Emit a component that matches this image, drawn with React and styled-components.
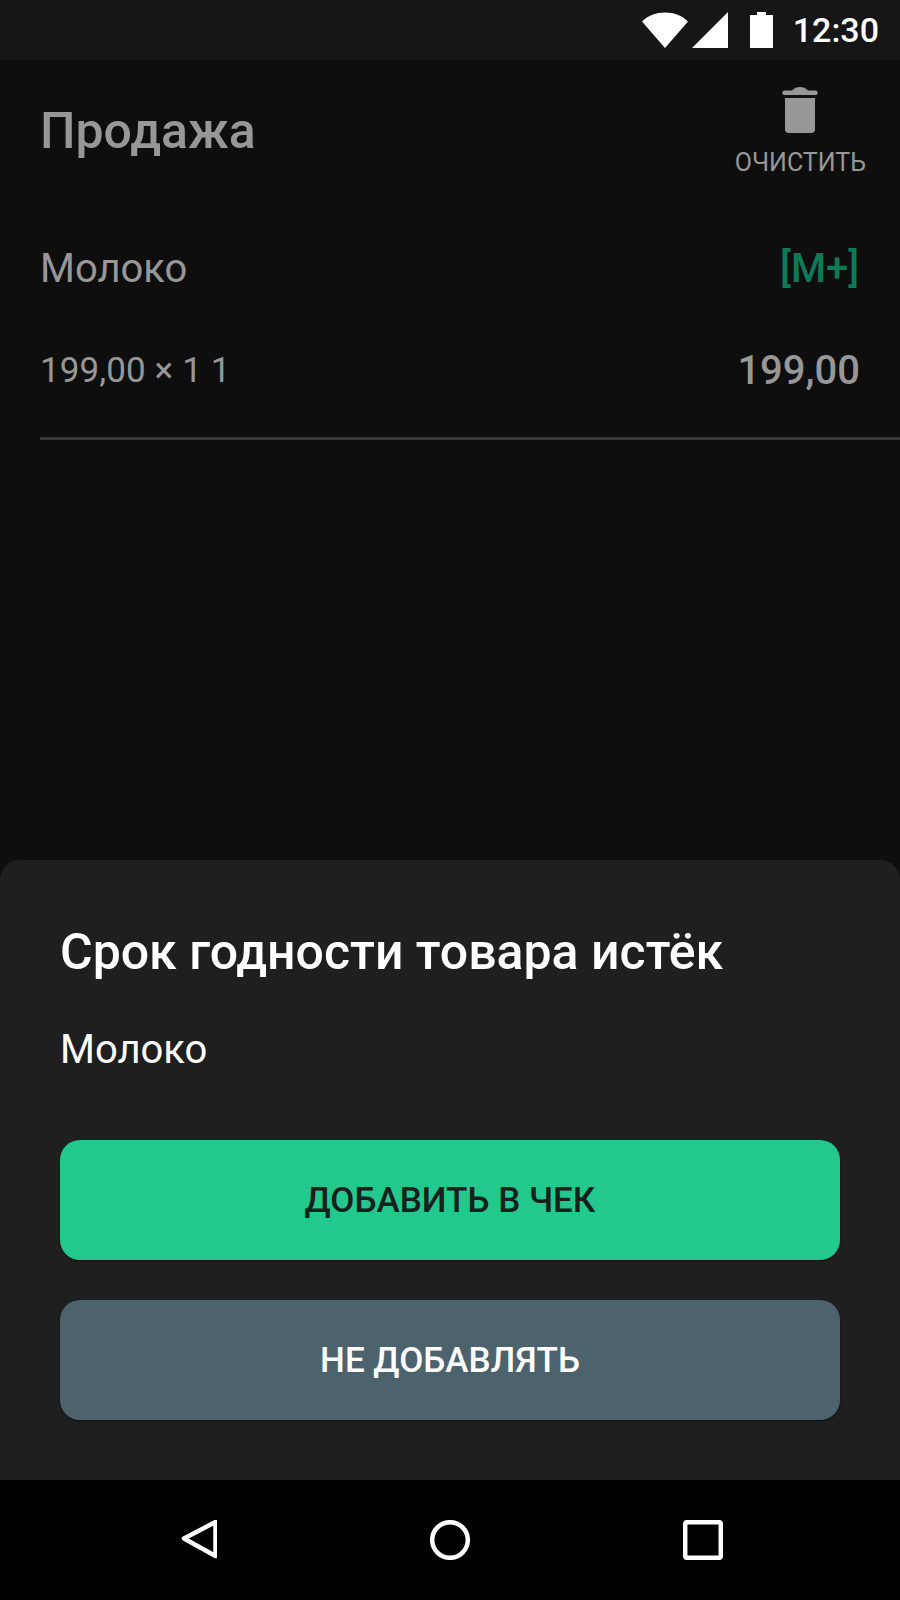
import React from "react";
import styled, { createGlobalStyle } from "styled-components";

const Global = createGlobalStyle`
  html, body {
    margin: 0;
    padding: 0;
    background: #000;
  }
  * {
    box-sizing: border-box;
  }
`;

const Screen = styled.div`
  width: 900px;
  height: 1600px;
  display: flex;
  flex-direction: column;
  overflow: hidden;
  background: #0f0e0f;
  font-family: Roboto, "Noto Sans", sans-serif;
`;

const StatusBar = styled.div`
  height: 60px;
  flex: none;
  display: flex;
  align-items: center;
  justify-content: flex-end;
  padding-right: 21px;
  background: #161616;
  color: #fff;
`;

const StatusIcon = styled.svg`
  display: block;
  flex: none;
  margin-right: ${(p) => p.$gap}px;
`;

const Clock = styled.span`
  font-size: 34px;
  font-weight: 500;
  line-height: 40px;
`;

const Content = styled.div`
  flex: 1;
  min-height: 0;
  padding-left: 40px;
`;

const Header = styled.div`
  height: 140px;
  display: flex;
  justify-content: space-between;
  padding: 27px 34px 0 0;
`;

const Title = styled.h1`
  margin: 0;
  padding-top: 16px;
  font-size: 50px;
  line-height: 56px;
  font-weight: 500;
  color: #979797;
`;

const ClearAction = styled.div`
  display: flex;
  flex-direction: column;
  align-items: center;
  gap: 14px;
  color: #979797;
  font-size: 25px;
  line-height: 32px;
`;

const Row = styled.div`
  display: flex;
  justify-content: space-between;
  align-items: center;
  padding-right: 41px;
  height: ${(p) => p.$height}px;
  color: #979797;
`;

const Name = styled.span`
  font-size: 40px;
`;

const Badge = styled.span`
  font-size: 40px;
  font-weight: 500;
  color: #0f7a58;
`;

const Qty = styled.span`
  font-size: 35px;
  letter-spacing: 0.1px;
`;

const Sum = styled.span`
  font-size: 40px;
  font-weight: 500;
  margin-right: -1px;
`;

const Divider = styled.div`
  height: 3px;
  margin-top: 33px;
  background: #3a3a3a;
`;

const Sheet = styled.div`
  height: 620px;
  flex: none;
  padding: 62px 60px 0;
  border-radius: 20px 20px 0 0;
  background: #201f20;
  color: #fff;
`;

const SheetTitle = styled.h2`
  margin: 0;
  font-size: 50px;
  line-height: 60px;
  font-weight: 500;
`;

const SheetText = styled.p`
  margin: 46px 0 68px;
  font-size: 40px;
  line-height: 44px;
`;

const Actions = styled.div`
  display: flex;
  flex-direction: column;
  gap: 40px;
`;

const Action = styled.button`
  height: 120px;
  border: 0;
  border-radius: 20px;
  padding: 0;
  font-family: inherit;
  font-size: 35px;
  font-weight: 500;
  background: ${(p) => (p.$primary ? "#22c88c" : "#4c636e")};
  color: ${(p) => (p.$primary ? "#16201c" : "#fff")};
  box-shadow: 0 1px 2px rgba(0, 0, 0, 0.6);
`;

const NavBar = styled.div`
  height: 120px;
  flex: none;
  display: grid;
  grid-template-columns: repeat(3, 40px);
  justify-content: space-between;
  align-items: center;
  padding: 0 177px;
  background: #000;
`;

const NavIcon = styled.svg`
  display: block;
`;

export default function App() {
  return (
    <Screen>
      <Global />
      <StatusBar>
        <StatusIcon $gap={4} width="46" height="36" viewBox="0 0 46 36">
          <path d="M0 9.5C6 3.5 14 0.5 23 0.5s17 3 23 9L23 36z" fill="#fff" />
        </StatusIcon>
        <StatusIcon $gap={22} width="36" height="36" viewBox="0 0 36 36">
          <path d="M0 36L36 0v36z" fill="#fff" />
        </StatusIcon>
        <StatusIcon $gap={20} width="23" height="36" viewBox="0 0 23 36">
          <path d="M7 3V0h9v3h7v33H0V3z" fill="#fff" />
        </StatusIcon>
        <Clock>12:30</Clock>
      </StatusBar>
      <Content>
        <Header>
          <Title>Продажа</Title>
          <ClearAction>
            <svg width="36" height="46" viewBox="0 0 36 46">
              <path
                d="M3 11h30v31a4 4 0 0 1-4 4H7a4 4 0 0 1-4-4zM2.500 3.500H10C12 1 15 0 18 0s6 1 8 3.500h7.500a2.250 2.250 0 0 1 0 4.500h-31a2.250 2.250 0 0 1 0-4.500z"
                fill="#979797"
              />
            </svg>
            <span>ОЧИСТИТЬ</span>
          </ClearAction>
        </Header>
        <Row $height={136}>
          <Name>Молоко</Name>
          <Badge>[M+]</Badge>
        </Row>
        <Row $height={68}>
          <Qty>199,00 × 1 1</Qty>
          <Sum>199,00</Sum>
        </Row>
        <Divider />
      </Content>
      <Sheet>
        <SheetTitle>Срок годности товара истёк</SheetTitle>
        <SheetText>Молоко</SheetText>
        <Actions>
          <Action $primary>ДОБАВИТЬ В ЧЕК</Action>
          <Action>НЕ ДОБАВЛЯТЬ</Action>
        </Actions>
      </Sheet>
      <NavBar>
        <NavIcon width="40" height="40" viewBox="0 0 40 40">
          <path
            d="M38.500 2L7 18.500L38.500 36z"
            fill="none"
            stroke="#fff"
            strokeWidth="4.500"
            strokeLinejoin="round"
          />
        </NavIcon>
        <NavIcon width="40" height="40" viewBox="0 0 40 40">
          <circle cx="20" cy="20" r="17.800" fill="none" stroke="#fff" strokeWidth="4.500" />
        </NavIcon>
        <NavIcon width="40" height="40" viewBox="0 0 40 40">
          <rect x="2.200" y="2.200" width="35.600" height="35.600" rx="1.500" fill="none" stroke="#fff" strokeWidth="4.500" />
        </NavIcon>
      </NavBar>
    </Screen>
  );
}
